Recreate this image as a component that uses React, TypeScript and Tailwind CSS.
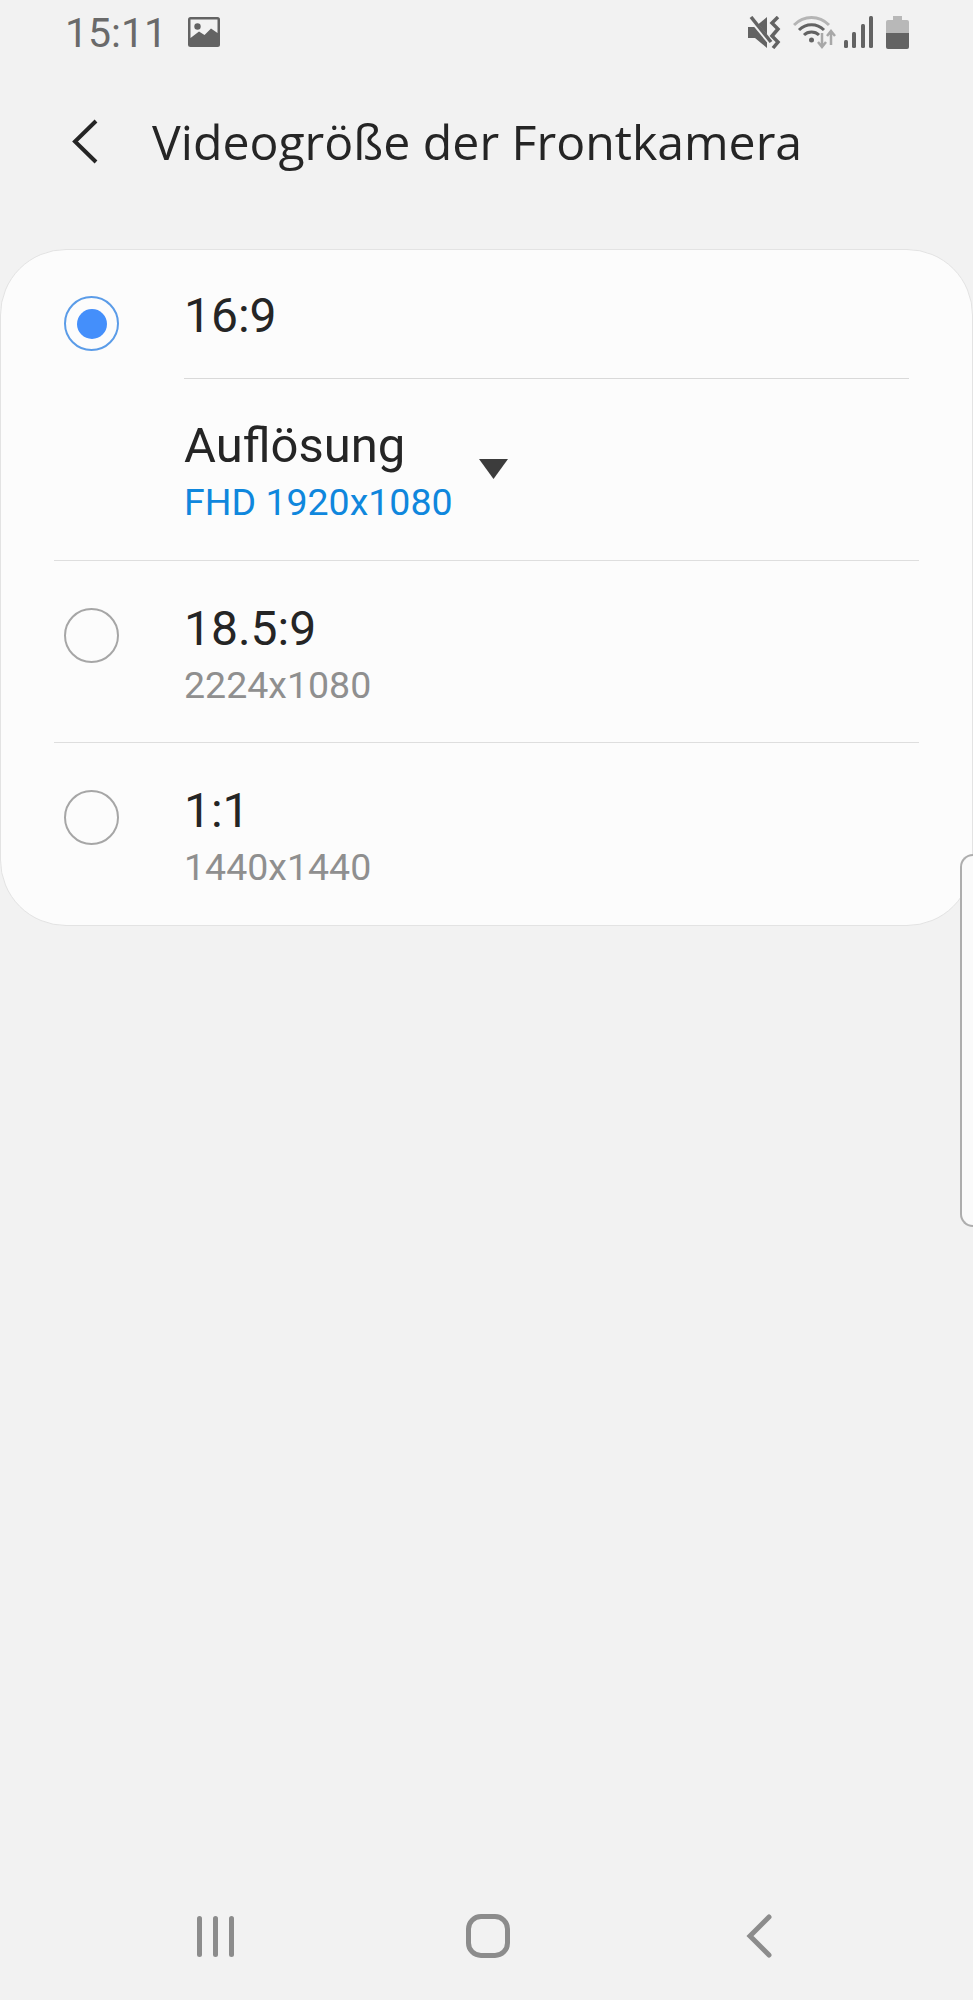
import React from 'react';

const roboto = "font-['Roboto',sans-serif]";
const titleCls = `${roboto} text-[48px] leading-[56px] text-[#252525]`;
const subCls = `${roboto} text-[37.5px] leading-[46px] mt-[5px]`;

function Radio({ checked }: { checked?: boolean }) {
  return (
    <div
      className={`w-[55px] h-[55px] rounded-full flex items-center justify-center border-[2.5px] ${
        checked ? 'border-[#5b9ce8]' : 'border-[#a6a6a6]'
      }`}
    >
      {checked && <div className="w-[30px] h-[30px] rounded-full bg-[#448ffb]" />}
    </div>
  );
}

function OptionRow({ title, sub }: { title: string; sub: string }) {
  return (
    <div className="flex h-[181px]">
      <div className="w-[183px] pl-[63px] pt-[47px] shrink-0">
        <Radio />
      </div>
      <div className="pt-[40px]">
        <div className={titleCls}>{title}</div>
        <div className={`${subCls} text-[#8f8f8f]`}>{sub}</div>
      </div>
    </div>
  );
}

function StatusIcons() {
  return (
    <div className="flex items-center">
      {/* mute */}
      <svg width="34" height="33" viewBox="0 0 34 33" className="ml-[1px]">
        <path d="M0 11h7L19 1v31L7 22H0z" fill="#636363" />
        <path d="M2 2l19 23" stroke="#f2f2f2" strokeWidth="5" />
        <path d="M3 1l20 25" stroke="#636363" strokeWidth="3.5" />
        <path d="M30 1l-6 6 6 6-6 7 6 6-5 6" fill="none" stroke="#636363" strokeWidth="3.5" />
      </svg>
      {/* wifi */}
      <svg width="44" height="33" viewBox="0 0 44 33" className="ml-[11px]">
        <path d="M1 9C11 -1 26 -1 36 9" fill="none" stroke="#b5b5b5" strokeWidth="3" />
        <path d="M6 14C13 7 24 7 31 14" fill="none" stroke="#636363" strokeWidth="3" />
        <path d="M11 19C15 15 22 15 26 19" fill="none" stroke="#636363" strokeWidth="3" />
        <circle cx="18.5" cy="24" r="2.5" fill="#636363" />
        <path d="M29 17v14M25 26l4 5 4-5" fill="none" stroke="#a8a8a8" strokeWidth="2.5" />
        <path d="M38 29V15M34 20l4-5 4 5" fill="none" stroke="#a8a8a8" strokeWidth="2.5" />
      </svg>
      {/* signal */}
      <svg width="29" height="32" viewBox="0 0 29 32" className="ml-[7px]">
        <rect x="0" y="24" width="4" height="8" rx="1.5" fill="#636363" />
        <rect x="8" y="16" width="4" height="16" rx="1.5" fill="#636363" />
        <rect x="17" y="8" width="4" height="24" rx="1.5" fill="#636363" />
        <rect x="25" y="0" width="4" height="32" rx="1.5" fill="#636363" />
      </svg>
      {/* battery */}
      <svg width="23" height="33" viewBox="0 0 23 33" className="ml-[13px]">
        <path d="M7 0h9v4h5a2 2 0 0 1 2 2v11H0V6a2 2 0 0 1 2-2h5z" fill="#b8b8b8" />
        <path d="M0 17h23v14a2 2 0 0 1-2 2H2a2 2 0 0 1-2-2z" fill="#636363" />
      </svg>
    </div>
  );
}

export default function App() {
  return (
    <div className="relative w-[973px] h-[2000px] overflow-hidden bg-[#f2f2f2] flex flex-col">
      {/* Status bar */}
      <div className="h-[64px] shrink-0 flex items-center justify-between pl-[65px] pr-[64px]">
        <div className="flex items-center">
          <span className={`${roboto} text-[41px] leading-[48px] pt-[2px] text-[#6a6a6a]`}>15:11</span>
          <svg width="32" height="30" viewBox="0 0 32 30" className="ml-[21px]">
            <rect width="32" height="30" rx="2.5" fill="#636363" />
            <path d="M2.5 2.5H29.5V16L23 11.5L16.5 18L11 14.5L2.5 21Z" fill="#f2f2f2" />
            <circle cx="9.5" cy="9.5" r="3.2" fill="#636363" />
          </svg>
        </div>
        <StatusIcons />
      </div>

      {/* Header */}
      <div className="h-[185px] shrink-0 pt-[45px] flex items-start">
        <div className="h-[64px] flex items-center pl-[70px]">
          <svg width="29" height="47" viewBox="0 0 29 47">
            <path d="M26 3L5 23.5L26 44" fill="none" stroke="#252525" strokeWidth="4" />
          </svg>
        </div>
        <div className="ml-[53px] font-['Open_Sans',sans-serif] text-[48.2px] leading-[64px] text-[#252525]">
          Videogröße der Frontkamera
        </div>
      </div>

      {/* Card */}
      <div className="h-[677px] shrink-0 rounded-[66px] border border-[#e3e3e3] bg-[#fcfcfc]">
        <div className="flex h-[129px]">
          <div className="w-[183px] pl-[63px] pt-[46px] shrink-0">
            <Radio checked />
          </div>
          <div className="flex-1 mr-[63px] pt-[38px] border-b border-[#d9d9d9]">
            <div className={titleCls}>16:9</div>
          </div>
        </div>

        <div className="flex h-[181px] pl-[183px] pt-[39px]">
          <div>
            <div className={`${roboto} text-[49px] leading-[56px] text-[#252525]`}>Auflösung</div>
            <div className={`${subCls} text-[#0f87dd]`}>FHD 1920x1080</div>
          </div>
          <svg width="29" height="20" viewBox="0 0 29 20" className="ml-[26px] mt-[41px]">
            <path d="M0 0H29L14.5 20Z" fill="#3c3c3c" />
          </svg>
        </div>

        <div className="h-px ml-[53px] mr-[53px] bg-[#dedede]" />
        <OptionRow title="18.5:9" sub="2224x1080" />
        <div className="h-px ml-[53px] mr-[53px] bg-[#dedede]" />
        <OptionRow title="1:1" sub="1440x1440" />
      </div>

      {/* Edge panel handle */}
      <div className="absolute right-0 top-[854px] w-[13px] h-[373px] rounded-l-[14px] border-2 border-r-0 border-[#adadad] bg-[#fafafa]" />

      {/* Navigation bar */}
      <div className="mt-auto h-[120px] shrink-0">
        <div className="h-[44px] mt-[34px] flex items-center">
          <div className="ml-[197px] flex gap-[11px]">
            <div className="w-[5px] h-[41px] rounded-full bg-[#8c8c8c]" />
            <div className="w-[5px] h-[41px] rounded-full bg-[#8c8c8c]" />
            <div className="w-[5px] h-[41px] rounded-full bg-[#8c8c8c]" />
          </div>
          <div className="ml-[232px] w-[44px] h-[44px] rounded-[15px] border-[5px] border-[#8c8c8c]" />
          <svg width="26" height="44" viewBox="0 0 26 44" className="ml-[236px]">
            <path d="M23 3L4 22L23 41" fill="none" stroke="#8c8c8c" strokeWidth="5" strokeLinecap="round" />
          </svg>
        </div>
      </div>
    </div>
  );
}
